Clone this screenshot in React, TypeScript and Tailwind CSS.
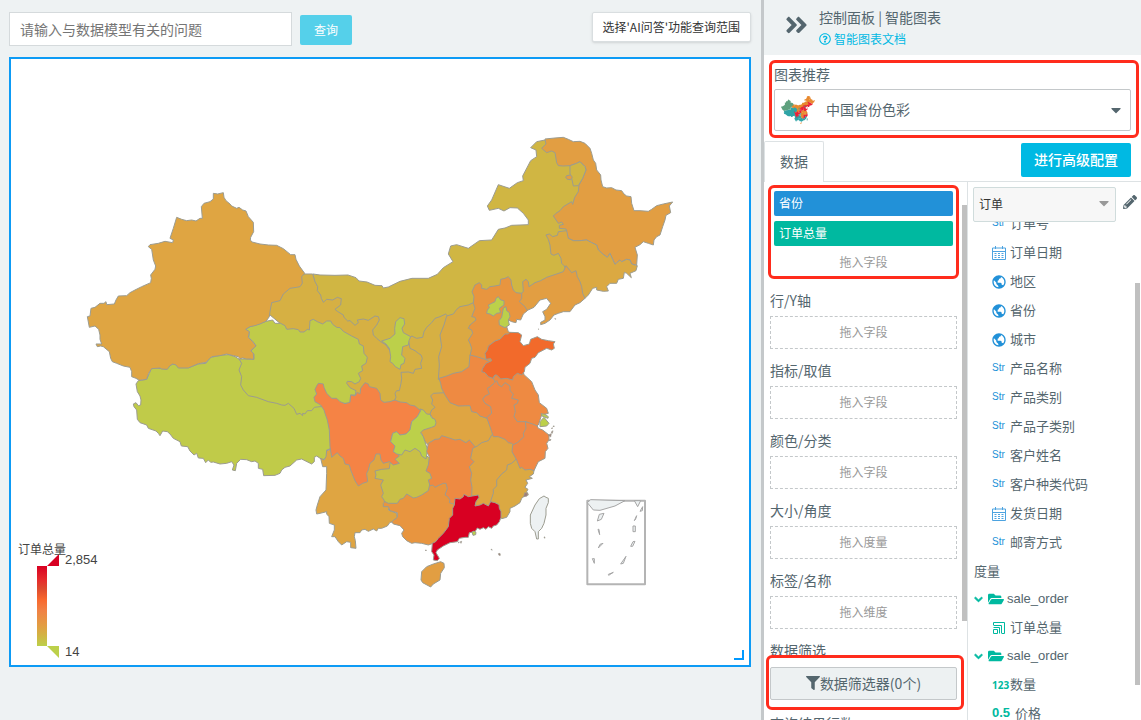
import React from "react";
import { FaAngleDoubleRight, FaChevronDown, FaFilter, FaFolderOpen, FaPencilAlt, FaCaretDown, FaRegQuestionCircle } from "react-icons/fa";
import { BiWorld } from "react-icons/bi";

type Province = { name: string; ox: number; oy: number; fill: string; thumb: string; pts: string };

const TEAL = "#2fa4a6";
const GREEN = "#5fa07e";
const ORANGE = "#e8892f";
const RED = "#ea2038";

/* Outlines are traced at three units per pixel from the origin (ox, oy); later entries lie over earlier ones,
   so a province runs on beneath the neighbours that follow it. */
const provinces: Province[] = [
  { name: "内蒙古", ox: 0, oy: 0, fill: "#d0b643", thumb: ORANGE, pts: "939,822 960,825 1005,826 1044,825 1068,833 1077,843 1101,846 1125,856 1146,857 1150,864 1165,861 1200,844 1236,835 1285,835 1312,823 1330,803 1359,785 1345,762 1352,738 1370,734 1405,745 1438,722 1475,720 1495,688 1515,684 1535,676 1585,674 1585,660 1570,640 1552,624 1530,623 1512,633 1495,625 1468,631 1462,618 1475,600 1495,554 1528,565 1552,548 1570,542 1568,528 1592,482 1610,470 1608,450 1592,443 1610,425 1635,420 1640,430 1680,440 1740,480 1760,520 1735,578 1720,630 1740,700 1720,800 1690,850 1560,930 1440,980 1400,1000 1320,1040 1260,1050 1200,1050 1140,1040 1050,990 960,930" },
  { name: "甘肃", ox: 300, oy: 240, fill: "#d6b043", thumb: ORANGE, pts: "12,102 38,102 45,125 53,140 52,152 62,165 64,175 70,187 80,178 98,180 112,172 124,176 122,195 105,208 112,214 130,225 132,232 143,243 150,242 165,256 175,248 172,240 190,237 205,241 225,228 235,230 238,240 230,255 218,270 220,285 230,295 242,305 258,315 275,340 295,310 325,312 345,330 368,343 375,360 372,390 345,395 340,402 325,410 312,405 310,450 295,460 295,480 270,495 250,498 238,500 150,490 100,300 0,300 -120,200 -120,100" },
  { name: "陕西", ox: 300, oy: 240, fill: "#d6b043", thumb: RED, pts: "437,222 420,230 405,235 395,248 380,262 372,275 368,292 350,295 335,288 325,300 328,315 330,325 345,332 355,340 363,345 367,355 362,370 365,385 345,388 340,400 325,396 303,397 305,415 303,430 298,452 290,452 285,460 288,472 283,482 300,490 320,500 335,500 350,508 358,515 372,520 392,528 420,512 440,500 450,468 440,445 425,410 440,350 440,280 448,232" },
  { name: "西藏", ox: 120, oy: 350, fill: "#c0cb49", thumb: TEAL, pts: "357,27 345,20 325,14 300,16 270,23 258,40 235,42 225,46 205,53 175,53 170,44 160,42 150,46 140,57 125,56 95,54 88,70 80,88 55,92 48,102 52,125 60,138 63,150 62,165 55,167 48,158 40,162 42,170 50,180 52,208 60,218 80,225 85,235 108,243 115,250 120,257 128,243 142,245 150,252 160,265 180,275 184,288 203,290 210,303 222,315 230,310 235,324 250,325 257,338 265,330 272,337 280,336 300,342 320,340 335,335 342,345 337,360 346,362 350,340 362,328 380,329 395,335 405,333 415,340 415,355 428,358 431,377 465,376 480,370 485,360 495,352 510,348 530,330 545,327 555,332 575,342 583,335 583,322 590,318 605,328 612,328 620,320 620,300 636,295 640,240 640,205 612,160 595,150 585,160 560,120 400,60" },
  { name: "青海", ox: 300, oy: 240, fill: "#c0cb49", thumb: TEAL, pts: "-163,268 -150,260 -102,244 -82,240 -75,250 -58,250 -45,257 -40,268 -20,266 -5,269 0,276 12,276 22,268 28,270 30,242 40,238 52,245 68,252 80,243 92,243 98,253 110,262 120,263 130,274 155,288 175,298 178,312 190,318 192,340 202,352 198,370 185,378 188,392 175,400 182,415 178,425 165,432 155,425 142,424 140,430 150,443 168,452 166,465 152,465 150,490 130,490 120,500 60,500 43,502 35,512 22,512 15,522 8,520 8,527 0,520 -10,523 -18,505 -35,490 -45,496 -55,495 -70,490 -95,485 -130,472 -155,467 -170,450 -178,435 -175,410 -183,390 -175,370 -183,357 -160,357 -138,358 -138,342 -148,334 -132,318 -138,308 -154,292 -152,275" },
  { name: "新疆", ox: 80, oy: 180, fill: "#dfa542", thumb: GREEN, pts: "400,40 413,42 430,38 432,52 438,62 450,72 455,78 470,85 477,82 488,90 498,93 505,110 520,127 521,155 512,172 511,180 516,186 540,192 565,195 590,196 610,206 632,224 645,224 648,238 658,258 674,280 665,290 667,310 660,320 650,322 630,325 610,342 600,362 575,368 570,395 568,410 558,424 540,432 525,437 510,440 497,448 508,455 505,472 518,485 528,498 512,512 520,520 521,538 510,537 500,537 488,534 480,536 475,530 460,527 440,522 420,527 395,530 385,540 378,547 355,551 325,564 295,564 288,555 278,552 270,557 262,568 245,567 240,564 215,566 206,580 200,598 178,601 168,595 155,590 155,575 150,562 130,558 110,550 97,545 92,535 88,515 70,500 62,498 52,500 48,492 65,492 60,478 60,465 56,448 45,438 28,442 22,410 30,408 33,385 45,382 60,370 72,370 78,365 80,374 103,372 108,360 115,348 140,347 150,338 165,330 185,320 212,308 214,295 212,285 225,268 227,258 220,240 215,208 205,200 210,194 235,190 255,184 278,188 280,180 270,175 280,145 290,112 305,118 320,122 335,120 348,123 360,115 367,115 364,80 372,70 390,65 400,57" },
  { name: "山西", ox: 300, oy: 240, fill: "#dba942", thumb: RED, pts: "440,228 460,222 470,208 480,200 505,195 520,188 540,210 540,235 528,245 528,275 525,295 525,310 525,350 520,385 490,400 475,400 460,405 440,415 415,418 418,375 416,350 425,320 420,285 432,255" },
  { name: "宁夏", ox: 300, oy: 240, fill: "#bcd04a", thumb: GREEN, pts: "287,245 300,233 312,236 314,252 306,265 310,278 332,290 327,302 325,315 308,320 305,345 315,355 312,370 303,374 300,388 286,380 278,370 270,365 272,350 268,325 258,312 245,303 270,295 285,282 284,265" },
  { name: "黑龙江", ox: 430, oy: 120, fill: "#e29e42", thumb: ORANGE, pts: "345,57 375,54 400,52 415,58 430,65 450,64 465,70 480,85 485,100 490,120 497,130 500,150 512,165 513,180 518,200 530,204 545,203 558,210 575,212 582,222 590,228 603,230 605,250 612,272 630,272 655,274 665,268 680,257 700,252 728,246 718,258 722,278 708,286 705,300 698,320 690,345 680,350 672,360 670,375 655,370 640,365 630,374 615,382 622,405 620,435 605,432 600,420 590,418 575,425 570,420 555,433 548,418 540,400 532,412 522,405 510,395 505,390 500,375 485,368 470,360 450,362 430,362 415,355 408,340 410,332 408,327 388,325 388,316 400,313 395,306 385,310 370,288 378,280 390,272 400,260 425,245 428,253 434,232 445,215 447,195 458,175 468,150 465,140 450,125 440,130 420,137 400,138 385,137 380,128 375,98 365,93 350,98 335,85 348,72" },
  { name: "鄂伦春", ox: 430, oy: 120, fill: "#d0b643", thumb: ORANGE, pts: "420,137 440,130 450,125 465,140 468,150 458,175 445,197 430,198 425,175 420,162" },
  { name: "加格达奇", ox: 430, oy: 120, fill: "#e29e42", thumb: ORANGE, pts: "410,167 422,165 427,172 422,179 412,178 407,172" },
  { name: "吉林", ox: 430, oy: 120, fill: "#dba942", thumb: RED, pts: "410,332 415,355 430,362 450,362 470,360 485,368 500,375 505,390 522,405 532,412 540,400 548,418 555,433 570,420 575,425 590,418 600,420 605,432 622,437 618,452 600,460 604,473 590,460 583,457 580,475 565,478 560,490 540,490 530,500 535,513 520,514 500,510 500,502 488,505 475,525 465,535 455,520 445,500 435,480 430,470 415,460 402,437 395,430 393,415 385,400 372,406 363,402 360,375 355,358 348,345 358,342 368,350 382,346 385,335" },
  { name: "辽宁", ox: 430, oy: 120, fill: "#e29e42", thumb: RED, pts: "408,437 425,458 438,452 442,470 450,485 455,500 458,520 465,535 450,548 435,555 420,575 400,575 385,580 372,585 360,600 345,610 332,614 332,607 345,600 345,590 338,575 350,568 362,550 350,535 330,540 312,562 290,572 275,560 265,550 262,540 265,528 280,515 278,485 288,478 295,485 297,500 315,488 332,482 350,472 380,462 400,455" },
  { name: "河北", ox: 430, oy: 270, fill: "#e8953f", thumb: RED, pts: "130,100 132,80 126,65 135,45 148,38 155,45 155,55 170,58 180,50 195,48 210,45 212,28 225,25 235,20 243,30 245,45 250,60 258,68 275,70 275,85 268,95 285,110 292,122 280,132 272,150 260,148 258,158 245,155 235,150 230,170 235,185 245,190 230,230 200,280 168,285 140,270 120,258 125,235 120,220 115,210 128,190 125,180 115,175 120,165 138,150 135,142 125,140 135,115" },
  { name: "北京", ox: 430, oy: 270, fill: "#bcd04a", thumb: TEAL, pts: "172,120 178,113 175,105 185,100 195,95 198,85 205,80 212,90 222,92 222,105 208,115 212,128 200,130 190,138 180,132 170,130" },
  { name: "天津", ox: 430, oy: 270, fill: "#bcd04a", thumb: TEAL, pts: "218,125 220,114 228,110 230,122 238,128 240,140 235,150 238,165 225,173 208,165 207,152 215,142" },
  { name: "云南", ox: 300, oy: 370, fill: "#dfa542", thumb: TEAL, pts: "62,265 72,270 78,260 80,242 88,240 95,230 150,220 240,230 270,250 290,270 285,300 260,320 265,345 275,375 275,398 265,420 290,430 292,442 283,455 270,457 262,468 245,475 235,475 230,483 220,477 205,484 195,478 185,480 180,488 165,488 163,500 166,512 168,535 152,533 152,517 140,515 125,525 115,515 105,500 95,500 103,480 103,465 88,460 87,440 80,432 80,425 60,430 50,432 48,420 52,405 60,380 78,360 80,310 80,290 68,290" },
  { name: "贵州", ox: 300, oy: 370, fill: "#c9bf47", thumb: TEAL, pts: "225,303 245,298 268,296 270,280 285,255 295,240 305,240 320,225 345,225 365,240 375,255 392,265 395,290 395,302 395,308 395,325 395,350 390,366 365,385 350,395 338,388 320,385 310,395 300,400 292,405 270,405 255,402 252,390 245,380 250,370 242,345 250,330 225,325 228,315" },
  { name: "四川", ox: 300, oy: 370, fill: "#f58345", thumb: RED, pts: "45,58 50,48 55,40 70,42 72,52 80,70 95,85 110,85 120,95 135,101 150,97 152,75 165,78 172,67 180,72 182,55 195,38 205,42 208,50 230,55 240,70 242,90 252,97 270,95 285,90 300,96 320,98 330,105 345,108 362,122 352,140 335,155 330,180 318,192 300,195 290,185 278,190 272,215 285,228 280,245 290,250 298,258 285,268 298,280 280,285 268,275 250,280 243,270 240,252 228,252 222,270 210,280 205,300 200,310 203,335 188,340 175,348 165,332 152,300 148,285 135,282 130,265 120,258 112,248 103,255 95,262 90,230 88,180 82,150 75,130 72,120 62,105 45,95 42,82 50,72" },
  { name: "湖北", ox: 400, oy: 400, fill: "#dfa542", thumb: ORANGE, pts: "92,-12 100,-20 135,-22 160,-5 180,5 215,5 225,25 240,35 255,40 280,40 290,80 290,115 265,140 225,160 205,140 180,135 125,125 105,130 85,135 75,125 65,100 50,95 55,75 90,70 100,60 95,50 90,42 95,30 105,22 95,12 98,0" },
  { name: "重庆", ox: 300, oy: 370, fill: "#bcd04a", thumb: TEAL, pts: "360,117 370,120 380,132 390,133 395,143 405,148 408,158 405,168 395,172 370,180 362,188 370,200 375,215 383,240 378,267 365,258 360,245 345,235 330,245 315,240 305,255 290,252 280,245 285,228 272,215 278,190 290,185 300,195 318,192 330,180 335,155 352,140 362,122" },
  { name: "广西", ox: 300, oy: 370, fill: "#e8953f", thumb: TEAL, pts: "250,400 255,395 265,400 292,400 300,388 310,385 320,372 340,384 350,382 365,375 385,362 390,340 430,330 460,345 475,390 475,470 425,515 400,520 385,525 365,520 345,518 335,520 320,512 308,500 305,490 312,480 300,467 280,462 275,455 292,442 292,428 270,422 265,410 250,410" },
  { name: "湖南", ox: 400, oy: 400, fill: "#ee8a42", thumb: ORANGE, pts: "85,130 105,118 118,117 125,107 145,113 165,120 180,118 198,128 208,120 225,140 228,155 225,175 225,185 220,195 228,220 225,240 228,262 225,305 200,315 180,315 160,312 148,308 150,300 143,290 135,285 142,265 138,250 130,250 118,255 105,262 98,255 90,258 85,240 95,235 90,220 78,213 85,195 88,170 80,155" },
  { name: "江西", ox: 400, oy: 400, fill: "#dfa542", thumb: RED, pts: "218,145 232,138 245,128 265,122 275,105 290,95 330,95 350,115 355,148 362,180 345,205 330,210 320,230 305,245 300,270 290,290 285,315 250,325 225,325 222,310 215,290 216,262 212,240 215,220 208,200 222,185 212,175" },
  { name: "福建", ox: 400, oy: 400, fill: "#dba942", thumb: TEAL, pts: "350,176 375,180 395,195 402,212 400,222 388,230 397,235 378,240 383,250 375,262 384,268 380,275 385,285 375,287 365,295 360,308 345,318 330,325 330,335 320,352 305,356 290,340 285,320 272,315 272,303 280,280 280,268 290,258 290,240 305,222 320,210 322,195 335,190" },
  { name: "河南", ox: 430, oy: 270, fill: "#ee8a42", thumb: ORANGE, pts: "120,255 140,260 165,268 190,280 210,310 215,340 205,365 195,385 195,440 182,450 165,443 150,438 140,428 125,425 120,407 85,408 60,398 45,375 35,355 32,340 27,325 50,318 70,310 95,305 117,290" },
  { name: "江苏", ox: 430, oy: 270, fill: "#ee8a42", thumb: ORANGE, pts: "190,325 200,308 230,310 255,305 278,300 282,314 305,335 315,360 325,375 328,398 350,415 355,430 335,435 330,450 325,465 310,475 290,475 265,465 245,450 240,420 235,400 225,370 215,355 200,345" },
  { name: "安徽", ox: 430, oy: 270, fill: "#f08844", thumb: ORANGE, pts: "192,340 200,332 206,345 215,350 225,338 240,348 240,362 250,372 245,385 265,390 262,400 252,405 256,425 252,440 262,455 275,455 290,455 302,470 300,490 285,508 270,525 255,528 245,520 235,518 225,508 205,500 190,500 185,485 180,470 170,442 185,430 182,410 165,400 158,388 165,378 178,372 172,355 180,350" },
  { name: "山东", ox: 430, oy: 270, fill: "#f26a2b", thumb: RED, pts: "165,250 172,240 175,228 195,213 210,208 225,192 235,192 240,187 265,188 275,195 270,215 280,227 298,222 302,208 322,200 335,208 355,212 375,215 370,222 373,235 365,240 350,235 325,248 315,262 305,265 300,280 285,292 283,305 275,315 262,310 250,320 248,330 230,325 212,327 200,315 195,315 188,325 175,320 165,308 155,305 158,295 168,280 185,272 182,266 168,268" },
  { name: "浙江", ox: 400, oy: 400, fill: "#f08844", thumb: RED, pts: "376,65 398,72 412,78 415,85 428,90 447,105 447,120 440,130 444,145 436,155 435,175 415,185 410,195 402,212 390,208 375,210 365,202 360,205 350,180 336,155 338,135 352,128 372,110 370,100 378,85" },
  { name: "上海", ox: 430, oy: 270, fill: "#bcd04a", thumb: TEAL, pts: "330,455 342,442 357,460 350,468 330,470" },
  { name: "崇明", ox: 430, oy: 270, fill: "#bcd04a", thumb: TEAL, pts: "333,431 345,433 355,440 354,445 336,438" },
  { name: "广东", ox: 400, oy: 400, fill: "#d80022", thumb: TEAL, pts: "165,295 180,297 190,290 192,283 205,290 235,285 237,292 228,305 225,318 240,315 250,310 265,318 272,305 285,308 297,314 298,325 303,335 303,352 298,365 290,375 280,378 275,385 265,380 258,388 250,383 240,388 232,384 225,395 208,398 205,412 195,412 178,415 172,425 150,428 130,438 112,450 108,458 118,475 112,482 100,480 102,465 95,455 97,430 107,425 115,415 130,400 145,380 148,355 158,345 158,325 163,315" },
  { name: "海南", ox: 400, oy: 400, fill: "#e29e42", thumb: ORANGE, pts: "100,492 122,485 132,490 133,503 122,520 120,540 100,552 92,561 68,548 63,540 65,515 80,500" },
  { name: "台湾", ox: 400, oy: 400, fill: "#edf1f2", thumb: TEAL, pts: "432,288 438,292 445,295 445,308 438,325 438,345 432,370 425,385 415,395 415,417 410,417 405,395 395,385 391,370 391,345 405,315 418,296" },
  { name: "澳门香港", ox: 400, oy: 400, fill: "#bcd04a", thumb: TEAL, pts: "216,396 222,393 228,397 227,404 219,406" },
];

const islands = [
  "453,97 459,92 457,100", "445,105 454,101 452,111", "455,84 457,83 456,87", "447,120 453,118 450,123", "459,78 463,78 461,81",
  "295,461 300,460 301,466 297,466", "273,448 276,448 276,451", "432,411 435,411 434,415", "181,425 185,424 183,430", "175,426 178,427 176,429", "76,450 79,450 78,453", "374,278 384,280 380,289 371,290",
];

const seaShapes = [
  "202,68 212,59 315,62 285,78 240,91 220,90",
  "343,62 362,62 353,80",
  "238,103 252,100 244,118 232,123",
  "234,148 237,148 239,164",
  "240,193 249,190 235,204",
  "217,236 223,236 223,250",
  "265,283 280,277 266,286",
  "302,252 318,229 310,250",
  "332,199 339,185 345,184 338,199",
  "339,138 346,138 346,155 339,155",
  "343,122 350,107 347,117",
  "360,94 368,80 367,92",
];

const thirds = (ox: number, oy: number) => `translate(${ox} ${oy}) scale(0.33333)`;

function ChinaMap() {
  return (
    <svg viewBox="11 59 738 606" className="block w-full" role="img" aria-label="中国省份色彩">
      <defs>
        <linearGradient id="scale" x1="0" y1="0" x2="0" y2="1">
          <stop offset="0" stopColor="#d80022" />
          <stop offset="0.18" stopColor="#e62d2c" />
          <stop offset="0.28" stopColor="#dd4a2e" />
          <stop offset="0.42" stopColor="#f8682e" />
          <stop offset="0.56" stopColor="#f08245" />
          <stop offset="0.75" stopColor="#e29e42" />
          <stop offset="0.88" stopColor="#d0b643" />
          <stop offset="1" stopColor="#bcd04a" />
        </linearGradient>
      </defs>
      <g stroke="#9c9c90" strokeWidth="1" strokeLinejoin="round">
        {provinces.map((p) => (
          <polygon key={p.name} points={p.pts} fill={p.fill} transform={thirds(p.ox, p.oy)} vectorEffect="non-scaling-stroke" />
        ))}
        <g transform={thirds(400, 400)} fill="#a07c78" strokeWidth="2">
          {islands.map((s) => <polygon key={s} points={s} />)}
        </g>
        <g transform={thirds(430, 270)} fill="#a07c78" strokeWidth="2">
          <path d="M374 146h3v2zM324 177h2v1z" />
        </g>
        <g transform={thirds(520, 480)} fill="#edf1f2" stroke="#b4b4b4" strokeWidth="3">
          <rect x="202" y="62" width="173" height="251" fill="#fff" strokeWidth="6" />
          {seaShapes.map((s) => <polygon key={s} points={s} stroke="#a5a5a5" />)}
        </g>
      </g>
      <rect x="37" y="566" width="10" height="80" fill="url(#scale)" />
      <polygon points="47,566 59,554 59,566" fill="#d80022" />
      <polygon points="47,646 59,646 59,658" fill="#bcd04a" />
      <g fill="#444" fontSize="13" fontFamily='"Liberation Sans", "Noto Sans CJK SC", sans-serif'>
        <text x="18" y="554" fontSize="12">订单总量</text>
        <text x="65" y="564">2,854</text>
        <text x="65" y="656">14</text>
      </g>
      <path d="M734 659h9v-9" fill="none" stroke="#0099ff" strokeWidth="2" />
    </svg>
  );
}

function MapThumb() {
  return (
    <svg viewBox="86 136 588 452" className="h-7 w-[34px]" preserveAspectRatio="none" aria-hidden="true">
      {provinces.map((p) => (
        <polygon key={p.name} points={p.pts} fill={p.thumb} transform={thirds(p.ox, p.oy)} />
      ))}
    </svg>
  );
}

function CalendarIcon() {
  return (
    <svg viewBox="0 0 14 14" className="h-[14px] w-[14px]" fill="none" stroke="#4da3e0" strokeWidth="1">
      <path d="M.5 2v11.500h13V2zM.5 5.500h13M3.500 0v3M10.500 0v3" />
      <path d="M2.500 7.500h9M2.500 9.500h9M2.500 11.500h9" strokeDasharray="2 1.500" />
    </svg>
  );
}

function MeasureIcon() {
  return (
    <svg viewBox="0 0 12 12" className="ml-px h-3 w-3" fill="none" stroke="#00b9a0" strokeWidth="1">
      <path d="M.5 3V.5h11v11H9M.5 3.500h8v8M.5 5.500h6v6M.5 7.500h4v4h-4z" />
    </svg>
  );
}

const fieldIcon: Record<string, React.ReactNode> = {
  str: <span className="font-['Liberation_Sans',sans-serif] text-[10px] text-[#2291d8]">Str</span>,
  date: <CalendarIcon />,
  geo: <BiWorld className="-ml-px h-4 w-4 shrink-0 text-[#2291d8]" />,
  calc: <MeasureIcon />,
  int: <span className="font-['Open_Sans',sans-serif] text-[10px] font-bold leading-none text-[#00b9a0]">123</span>,
};

function Field({ icon, label }: { icon: string; label: string }) {
  return (
    <li className="flex h-[29px] shrink-0 items-center pl-6">
      <span className="flex w-[18px] shrink-0 items-center">{fieldIcon[icon]}</span>
      <span>{label}</span>
    </li>
  );
}

function Folder() {
  return (
    <li className="flex h-7 shrink-0 items-center pl-[6px]">
      <FaChevronDown className="h-[9px] w-[9px] stroke-current stroke-[50] text-[#00b9a0]" />
      <FaFolderOpen className="ml-[5px] mr-[3px] h-4 w-4 text-[#00b9a0]" />
      <span className="font-['Liberation_Sans',sans-serif]">sale_order</span>
    </li>
  );
}

function DropZone({ label, hint }: { label: string; hint: string }) {
  return (
    <div className="mt-[9px]">
      <h3 className="h-7 leading-[25px]">{label}</h3>
      <div className="flex h-[33px] items-center justify-center border border-dashed border-[#c4c8ca] pb-[2px] text-xs text-[#999]">{hint}</div>
    </div>
  );
}

const dimensions: [string, string][] = [
  ["str", "订单号"], ["date", "订单日期"], ["geo", "地区"], ["geo", "省份"], ["geo", "城市"], ["str", "产品名称"],
  ["str", "产品类别"], ["str", "产品子类别"], ["str", "客户姓名"], ["str", "客户种类代码"], ["date", "发货日期"], ["str", "邮寄方式"],
];

export default function App() {
  return (
    <div className="flex h-screen overflow-hidden bg-[#eef2f3] font-['Noto_Sans_CJK_SC',sans-serif] text-sm text-[#54666e]">
      <main className="flex min-w-0 flex-1 flex-col px-[9px] pt-3">
        <div className="mb-[11px] flex items-start gap-2">
          <input aria-label="问题" placeholder="请输入与数据模型有关的问题" className="h-[34px] w-[283px] border border-[#d5dadc] bg-white px-[10px] pb-px text-sm outline-none placeholder:text-[#757575]" />
          <button className="mt-[3px] h-[30px] w-[52px] rounded-[2px] bg-[#55d0ea] text-xs text-white">查询</button>
          <button className="ml-auto mr-px h-[30px] rounded-[2px] border border-[#d9dee0] bg-white px-[10px] text-xs text-[#333] shadow-sm">选择'AI问答'功能查询范围</button>
        </div>
        <div className="mr-px border-2 border-[#0d9bf5] bg-white">
          <ChinaMap />
        </div>
      </main>

      <aside className="flex w-[380px] shrink-0 flex-col border-l-[3px] border-[#c4c8ca] bg-white">
        <header className="flex h-[55px] shrink-0 items-center bg-[#eef2f3] pl-5">
          <button aria-label="收起" className="mb-[5px] mr-[10px] w-[25px]">
            <FaAngleDoubleRight className="h-[26px] w-[25px]" />
          </button>
          <div>
            <h1 className="h-[22px] leading-5">控制面板 | 智能图表</h1>
            <a href="#docs" className="flex h-5 items-center gap-[3px] text-xs text-[#00b9e3]">
              <FaRegQuestionCircle className="h-3 w-3" />智能图表文档
            </a>
          </div>
        </header>

        <section className="relative px-[10px] pb-[10px] pt-[10px]">
          <label htmlFor="chart-type" className="block h-6 leading-[18px]">图表推荐</label>
          <div className="relative">
            <select id="chart-type" className="h-[42px] w-full appearance-none rounded-[2px] border border-[#c4c8ca] bg-white pb-[2px] pl-[51px]">
              <option>中国省份色彩</option>
            </select>
            <span className="pointer-events-none absolute left-[7px] top-[7px]"><MapThumb /></span>
            <FaCaretDown className="pointer-events-none absolute right-[7px] top-[13px] h-4 w-4" />
          </div>
          <div className="pointer-events-none absolute bottom-[3px] left-[5px] right-[2px] top-[5px] rounded-md border-[3px] border-[#ff2c1c]" />
        </section>

        <div className="flex h-[41px] shrink-0 items-end border-b border-[#dde2e4]">
          <button className="-mb-px h-[41px] w-[60px] rounded-t-[2px] border border-b-0 border-[#dde2e4] bg-white pb-[2px]">数据</button>
          <button className="mb-1 ml-auto mr-[10px] h-[34px] rounded-[2px] bg-[#00b9e3] px-[13px] pb-[2px] font-medium text-white">进行高级配置</button>
        </div>

        <div className="flex min-h-0 flex-1">
          <div className="relative w-[204px] shrink-0 overflow-hidden border-r border-[#dde2e4] pl-[6px] pr-[10px] pt-1">
            <div className="relative flex h-[93px] flex-col gap-[5px] px-1 pt-[5px] text-xs text-white">
              <div className="h-[25px] rounded-[2px] bg-[#2291d8] px-[5px] leading-6">省份</div>
              <div className="h-[25px] rounded-[2px] bg-[#00b9a0] px-[5px] leading-6">订单总量</div>
              <div className="h-[25px] text-center leading-[21px] text-[#999]">拖入字段</div>
              <div className="pointer-events-none absolute -left-[2px] right-[-2px] top-[-1px] bottom-0 rounded-md border-[3px] border-[#ff2c1c]" />
            </div>
            <DropZone label="行/Y轴" hint="拖入字段" />
            <DropZone label="指标/取值" hint="拖入字段" />
            <DropZone label="颜色/分类" hint="拖入字段" />
            <DropZone label="大小/角度" hint="拖入度量" />
            <DropZone label="标签/名称" hint="拖入维度" />
            <h3 className="mt-[9px] h-[29px] leading-[25px]">数据筛选</h3>
            <div className="relative">
              <button className="flex h-[33px] w-full items-center justify-center rounded-[2px] border border-[#c4c8ca] bg-[#edf1f2] pb-px">
                <FaFilter className="h-[14px] w-[14px]" />数据筛选器(0个)
              </button>
              <div className="pointer-events-none absolute -bottom-[10px] -left-[4px] -right-[7px] -top-[12px] rounded-md border-[3px] border-[#ff2c1c]" />
            </div>
            <h3 className="mt-[9px] h-7 leading-7">查询结果行数</h3>
            <div className="absolute right-0 top-[23px] h-[416px] w-[5px] bg-[#c0c0c0]" />
          </div>

          <div className="relative flex min-w-0 flex-1 flex-col pt-[5px]">
            <div className="flex items-start pl-[5px]">
              <div className="relative w-[143px]">
                <select aria-label="数据表" className="h-[35px] w-full appearance-none rounded-[2px] border border-[#d0dcdc] bg-[#f7f7f7] pb-[2px] pl-[5px] text-xs text-[#333]">
                  <option>订单</option>
                </select>
                <FaCaretDown className="pointer-events-none absolute right-1 top-2 h-4 w-4 text-[#999]" />
              </div>
              <button aria-label="编辑" className="ml-[7px] mt-2">
                <FaPencilAlt className="h-[14px] w-[14px]" />
              </button>
            </div>
            <div className="min-h-0 flex-1 overflow-hidden text-[13px]">
              <ul className="-mt-[13px] flex flex-col">
                {dimensions.map(([icon, label]) => <Field key={label} icon={icon} label={label} />)}
                <li className="h-7 shrink-0 pl-[6px] leading-7">度量</li>
                <Folder />
                <Field icon="calc" label="订单总量" />
                <Folder />
                <Field icon="int" label="数量" />
                <li className="flex h-[29px] items-center gap-[5px] pl-6">
                  <span className="font-['Liberation_Sans',sans-serif] text-[13px] font-bold text-[#00b9a0]">0.5</span>
                  <span>价格</span>
                </li>
              </ul>
            </div>
            <div className="absolute right-px top-[101px] h-[402px] w-[5px] bg-[#c0c0c0]" />
          </div>
        </div>
      </aside>
    </div>
  );
}
